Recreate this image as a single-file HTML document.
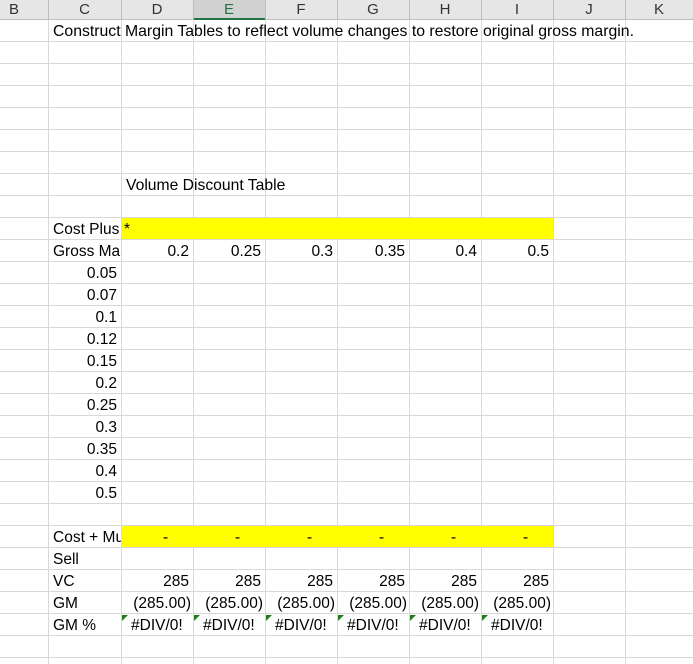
<!DOCTYPE html>
<html><head><meta charset="utf-8"><style>
body{margin:0;width:693px;height:664px;overflow:hidden;background:#fff;font-family:"Liberation Sans",Arial,sans-serif;font-size:15.5px;color:#000;position:relative}
.g{position:absolute;left:0;top:20px;width:693px;height:644px;
background-image:linear-gradient(to bottom,transparent 21px,#d8d8d8 21px);background-size:100% 22px}
.v{position:absolute;top:0;width:1px;height:664px;background:#d8d8d8}
.hdr{position:absolute;left:0;top:0;width:693px;height:20px;background:#e6e6e6;border-bottom:1px solid #bdbdbd;box-sizing:border-box}
.h{position:absolute;top:0;height:20px;line-height:20px;text-align:center;color:#333;font-size:15px}
.hl{position:absolute;top:0;width:1px;height:20px;background:#bdbdbd}
.y{position:absolute;left:122px;width:431px;height:21px;background:#ffff00}
.t{position:absolute;height:22px;line-height:22px;white-space:nowrap}
.r{text-align:right;width:69px}
.tri{position:absolute;width:0;height:0;border-top:6px solid #1e7b1e;border-right:6px solid transparent}
</style></head><body>
<div class="g"></div>
<div class="v" style="left:48px"></div><div class="v" style="left:121px"></div><div class="v" style="left:193px"></div><div class="v" style="left:265px"></div><div class="v" style="left:337px"></div><div class="v" style="left:409px"></div><div class="v" style="left:481px"></div><div class="v" style="left:553px"></div><div class="v" style="left:625px"></div>
<div class="hdr"></div>
<div style="position:absolute;left:194px;top:0;width:71px;height:20px;background:#d2d2d2;border-bottom:2px solid #217346;box-sizing:border-box"></div>
<div class="hl" style="left:48px"></div><div class="hl" style="left:121px"></div><div class="hl" style="left:193px"></div><div class="hl" style="left:265px"></div><div class="hl" style="left:337px"></div><div class="hl" style="left:409px"></div><div class="hl" style="left:481px"></div><div class="hl" style="left:553px"></div><div class="hl" style="left:625px"></div>
<div class="h" style="left:0;width:28px">B</div>
<div class="h" style="left:48px;width:73px">C</div>
<div class="h" style="left:121px;width:72px">D</div>
<div class="h" style="left:193px;width:72px;color:#217346">E</div>
<div class="h" style="left:265px;width:72px">F</div>
<div class="h" style="left:337px;width:72px">G</div>
<div class="h" style="left:409px;width:72px">H</div>
<div class="h" style="left:481px;width:72px">I</div>
<div class="h" style="left:553px;width:72px">J</div>
<div class="h" style="left:625px;width:68px">K</div>

<div class="t" style="left:53px;top:21px;font-size:15.8px">Construct Margin Tables to reflect volume changes to restore original gross margin.</div>
<div class="t" style="left:126px;top:175px;font-size:15.7px">Volume Discount Table</div>

<div class="y" style="top:218px"></div>
<div class="t" style="left:53px;top:219px">Cost Plus</div>
<div class="t" style="left:124px;top:219px">*</div>
<div class="t" style="left:53px;top:241px;width:68px;overflow:hidden">Gross Ma</div>
<div class="t r" style="left:120px;top:241px">0.2</div>
<div class="t r" style="left:192px;top:241px">0.25</div>
<div class="t r" style="left:264px;top:241px">0.3</div>
<div class="t r" style="left:336px;top:241px">0.35</div>
<div class="t r" style="left:408px;top:241px">0.4</div>
<div class="t r" style="left:480px;top:241px">0.5</div>

<div class="t r" style="left:48px;top:263px">0.05</div>
<div class="t r" style="left:48px;top:285px">0.07</div>
<div class="t r" style="left:48px;top:307px">0.1</div>
<div class="t r" style="left:48px;top:329px">0.12</div>
<div class="t r" style="left:48px;top:351px">0.15</div>
<div class="t r" style="left:48px;top:373px">0.2</div>
<div class="t r" style="left:48px;top:395px">0.25</div>
<div class="t r" style="left:48px;top:417px">0.3</div>
<div class="t r" style="left:48px;top:439px">0.35</div>
<div class="t r" style="left:48px;top:461px">0.4</div>
<div class="t r" style="left:48px;top:483px">0.5</div>

<div class="y" style="top:526px"></div>
<div class="t" style="left:53px;top:527px;width:68px;overflow:hidden">Cost + Mu</div>
<div class="t" style="left:163px;top:527px">-</div>
<div class="t" style="left:235px;top:527px">-</div>
<div class="t" style="left:307px;top:527px">-</div>
<div class="t" style="left:379px;top:527px">-</div>
<div class="t" style="left:451px;top:527px">-</div>
<div class="t" style="left:523px;top:527px">-</div>
<div class="t" style="left:53px;top:549px">Sell</div>
<div class="t" style="left:53px;top:571px">VC</div>
<div class="t" style="left:53px;top:593px">GM</div>
<div class="t" style="left:53px;top:615px">GM %</div>

<div class="t r" style="left:120px;top:571px">285</div>
<div class="t r" style="left:192px;top:571px">285</div>
<div class="t r" style="left:264px;top:571px">285</div>
<div class="t r" style="left:336px;top:571px">285</div>
<div class="t r" style="left:408px;top:571px">285</div>
<div class="t r" style="left:480px;top:571px">285</div>

<div class="t r" style="left:122px;top:593px">(285.00)</div>
<div class="t r" style="left:194px;top:593px">(285.00)</div>
<div class="t r" style="left:266px;top:593px">(285.00)</div>
<div class="t r" style="left:338px;top:593px">(285.00)</div>
<div class="t r" style="left:410px;top:593px">(285.00)</div>
<div class="t r" style="left:482px;top:593px">(285.00)</div>

<div class="t" style="left:131px;top:615px">#DIV/0!</div>
<div class="t" style="left:203px;top:615px">#DIV/0!</div>
<div class="t" style="left:275px;top:615px">#DIV/0!</div>
<div class="t" style="left:347px;top:615px">#DIV/0!</div>
<div class="t" style="left:419px;top:615px">#DIV/0!</div>
<div class="t" style="left:491px;top:615px">#DIV/0!</div>
<div class="tri" style="left:122px;top:615px"></div>
<div class="tri" style="left:194px;top:615px"></div>
<div class="tri" style="left:266px;top:615px"></div>
<div class="tri" style="left:338px;top:615px"></div>
<div class="tri" style="left:410px;top:615px"></div>
<div class="tri" style="left:482px;top:615px"></div>
</body></html>
